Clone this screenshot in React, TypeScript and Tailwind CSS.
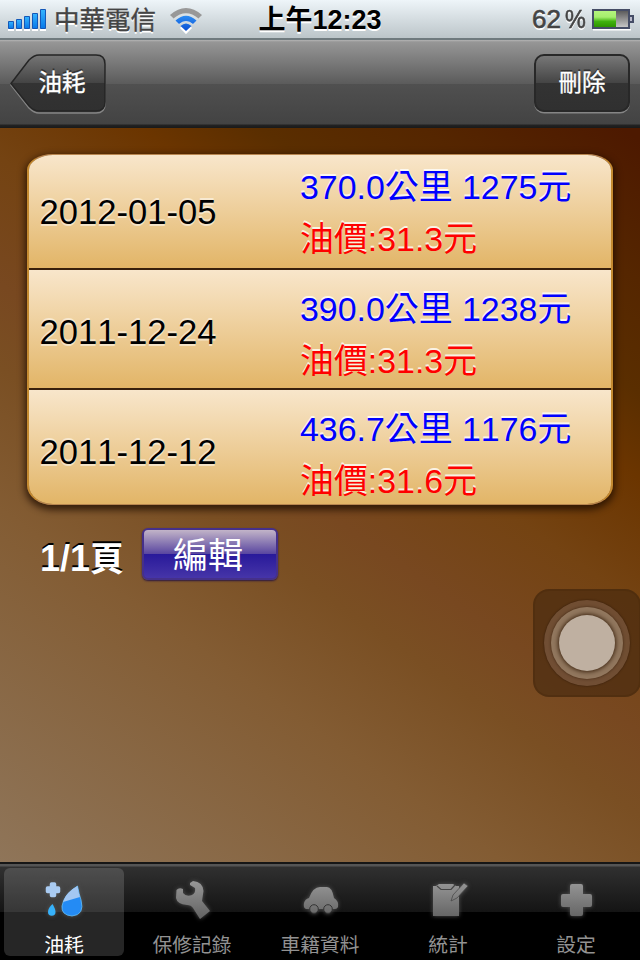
import React from "react";

const records = [
  { date: "2012-01-05", summary: "370.0公里 1275元", price: "油價:31.3元" },
  { date: "2011-12-24", summary: "390.0公里 1238元", price: "油價:31.3元" },
  { date: "2011-12-12", summary: "436.7公里 1176元", price: "油價:31.6元" },
];

const StatusBar = () => {
  return (
    <header className="flex h-10 items-start bg-gradient-to-b from-[#eef5f9] to-[#bcc5c9] border-b-2 border-[#6f7a7e] text-[#444]">
      <div className="flex w-[256px] items-start pl-2">
        <svg width="39" height="32" viewBox="0 0 39 32" className="shrink-0">
          <defs>
            <linearGradient id="bars" x1="0" y1="0" x2="0" y2="1">
              <stop offset="0" stopColor="#35b5ff" />
              <stop offset="1" stopColor="#0878e8" />
            </linearGradient>
          </defs>
          <path d="M0 29h6v2H0zM8 29h6v2H8zM16 29h6v2h-6zM24 29h6v2h-6zM32 29h6v2h-6z" fill="#fff" />
          <g fill="url(#bars)" stroke="#1458b8">
            <path d="M.5 21.500h5v7h-5z" />
            <path d="M8.500 19.500h5v9h-5z" />
            <path d="M16.500 16.500h5v12h-5z" />
            <path d="M24.500 13.500h5v15h-5z" />
            <path d="M32.500 9.500h5v19h-5z" />
          </g>
        </svg>
        <span className="ml-[7px] pt-1 text-[25.500px] leading-8 whitespace-nowrap [-webkit-text-stroke:0.4px_#444] [text-shadow:0_2px_0_#fff]">
          中華電信
        </span>
        <svg width="32" height="34" viewBox="0 0 32 34" className="ml-3.5 shrink-0">
          <defs>
            <linearGradient id="wifi" x1="0" y1="14" x2="0" y2="31" gradientUnits="userSpaceOnUse">
              <stop offset="0" stopColor="#2f93f8" />
              <stop offset="1" stopColor="#0a4fd0" />
            </linearGradient>
          </defs>
          <path d="M2 17Q16 5 30 17M8 23Q16 16 24 23M11 27 16 32 21 27" fill="none" stroke="#fff" strokeWidth="3" />
          <path d="M0 15Q16 1 32 15L28.500 18.500Q16 8 3.500 18.500Z" fill="#989898" />
          <path d="M5.500 20.500Q16 11 26.500 20.500L23 24Q16 18 9 24Z" fill="url(#wifi)" />
          <path d="M10.500 26Q16 21 21.500 26L16 31Z" fill="url(#wifi)" />
        </svg>
      </div>
      <div className="w-[128px] pt-1 text-center text-[27px] leading-8 font-bold whitespace-nowrap text-black [text-shadow:0_2px_0_#fff]">
        上午12:23
      </div>
      <div className="flex flex-1 items-start justify-end pr-1.5">
        <span className="pt-[3px] text-[26px] leading-8 [-webkit-text-stroke:0.6px_#444] [text-shadow:0_2px_0_#fff]">
          62<span className="ml-1 inline-block origin-left scale-x-90">%</span>
        </span>
        <svg width="43" height="32" viewBox="0 0 43 32" className="ml-[3px]">
          <defs>
            <linearGradient id="charge" x1="0" y1="0" x2="0" y2="1">
              <stop offset="0" stopColor="#b4f47d" />
              <stop offset=".38" stopColor="#a5ee6d" />
              <stop offset=".65" stopColor="#40b20f" />
              <stop offset="1" stopColor="#2e9400" />
            </linearGradient>
            <linearGradient id="empty" x1="0" y1="0" x2="0" y2="1">
              <stop offset="0" stopColor="#555" />
              <stop offset="1" stopColor="#ccc" />
            </linearGradient>
          </defs>
          <path d="M2 29h38v1.500H2z" fill="#fff" />
          <path d="M2 10h36v18H2z" fill="url(#empty)" stroke="#454d66" strokeWidth="2" />
          <path d="M3 11h22v16H3z" fill="url(#charge)" />
          <path d="M39 16h3v6h-3" fill="#bbc" stroke="#454d66" strokeWidth="2" />
        </svg>
      </div>
    </header>
  );
};

const NavBar = () => {
  return (
    <nav className="flex h-[88px] justify-between bg-[linear-gradient(#b4b4b4_0,#969696_2px,#5b5b5b_44px,#505050_44px,#434343_84px,#222_85px,#1a1a1a)] px-2.5 pt-3.5 text-[23.500px] text-white">
      <button className="relative flex h-[60px] w-24 items-start justify-center pt-3 pl-2 [-webkit-text-stroke:0.3px_#fff] [text-shadow:0_-2px_0_#333]">
        <svg width="97" height="60" viewBox="0 0 97 60" className="absolute top-0 left-0">
          <defs>
            <linearGradient id="back" x1="0" y1="0" x2="0" y2="1">
              <stop offset="0" stopColor="#757575" />
              <stop offset=".5" stopColor="#444" />
              <stop offset=".5" stopColor="#333" />
              <stop offset="1" stopColor="#303030" />
            </linearGradient>
          </defs>
          <path d="M1 31 19 7Q24 2 29 2H86Q95 2 95 11V50Q95 59 86 59H29Q24 59 19 54Z" fill="none" stroke="#858585" strokeWidth="1.500" />
          <path d="M1 29.500 19 6Q24 1 29 1H86Q95 1 95 10V48Q95 57 86 57H29Q24 57 19 52Z" fill="url(#back)" stroke="#252525" strokeWidth="1.500" />
        </svg>
        <span className="relative">油耗</span>
      </button>
      <button className="flex h-[58px] w-24 items-start justify-center rounded-[10px] border-2 border-[#282828] bg-[linear-gradient(#777,#444_50%,#333_50%,#303030)] pt-2.5 shadow-[0_1.5px_0_#858585] [-webkit-text-stroke:0.3px_#fff] [text-shadow:0_-2px_0_#333]">
        刪除
      </button>
    </nav>
  );
};

const RecordList = () => {
  return (
    <section className="mx-[27px] mt-[26px] overflow-hidden rounded-[26px_26px_26px_26px/16px_16px_20px_20px] border-x-2 border-y border-x-[#c48a30] border-y-[#b88650] shadow-[0_3px_7px_2px_rgba(30,12,0,0.75)]">
      {records.map((record, index) => (
        <div
          key={index}
          className="flex h-[120px] items-center border-b-2 border-[#38200c] bg-[linear-gradient(#f8e6cb,#f3dab2_25%,#e2b567)] pt-[5px] first:h-[115px] first:pt-0 last:h-[114px] last:border-b-0 last:pt-[9px]"
        >
          <div className="w-[260px] pl-[10.500px] text-[34.600px] leading-10 [text-shadow:0_-2px_0_rgba(255,255,255,0.5),0_2px_0_rgba(255,255,255,0.5)]">
            {record.date}
          </div>
          <div className={`pl-[11px] text-[33.900px] leading-[52px] whitespace-nowrap [text-shadow:0_-2px_0_rgba(255,255,255,0.8)] ${index === 0 ? "pt-0.5" : "pt-1.5"}`}>
            <p className="text-[#00f]">{record.summary}</p>
            <p className="text-[#f00]">{record.price}</p>
          </div>
        </div>
      ))}
    </section>
  );
};

const AssistiveTouch = () => {
  return (
    <div className="absolute top-[589px] left-[533px] flex h-[108px] w-[108px] items-center justify-center rounded-2xl border-2 border-[#482809]/40 bg-[#46290f]/65">
      <div className="flex size-[86px] items-center justify-center rounded-full bg-[#a08070]/35 shadow-[0_0_2px_#2e1808]">
        <div className="flex size-[72px] items-center justify-center rounded-full bg-[#a08970]/70 shadow-[0_0_3px_#3c2410]">
          <div className="size-14 rounded-full bg-[#bfb0a1] shadow-[0_0_4px_1px_#3c2410]"></div>
        </div>
      </div>
    </div>
  );
};

const DropIcon = () => (
  <>
    <path d="M17.500 16H20.500V20H24.500V23.500H20.500V27.500H17.500V23.500H13.500V20H17.500Z" fill="#a9cbf2" stroke="#a9cbf2" strokeWidth="3.500" strokeLinejoin="round" />
    <path d="M18.500 36Q21.500 41 21.500 44A3.700 3.700 0 0 1 14 44Q14 40 18.500 36Z" fill="#36b1fa" />
    <path d="M43.500 18Q45 26 47 32Q51 47 38 48Q27 47 28 38Q30 26 43.500 18Z" fill="#248bf4" stroke="#62bffa" strokeWidth=".8" />
    <path d="M43.500 18Q44.500 24 46 29L29 34Q32 24 43.500 18Z" fill="#a3c7f2" />
  </>
);

const WrenchIcon = () => (
  <path d="M28 15 31 13Q41 14 41.500 23L40 33 48 43 38 51 31 40Q29 37 25 37Q15 36 14 30L14.500 22Q17 19 21 21L21 25Q24 29 30 27Q34 25 33 20L28 17Z" />
);

const CarIcon = () => (
  <>
    <path d="M16 41Q13 40 14 35Q15 31 19 30Q23 19 30 19H37Q42 19 44 30Q49 33 48 39Q47 41 45 41Z" />
    <g stroke="#333" strokeWidth="1">
      <circle cx="24" cy="41" r="4.300" />
      <circle cx="38" cy="41" r="4.300" />
    </g>
  </>
);

const NoteIcon = () => (
  <>
    <path d="M15 18H18L21 16H35L38 18H41V48H15Z" />
    <path d="M19 18 23 21.500H33L37 17" fill="none" stroke="#444" strokeWidth="1.200" />
    <path d="M46 15 50 18 39 30 33 33 35 27Z" stroke="#444" strokeWidth=".7" />
  </>
);

const PlusIcon = () => (
  <path d="M26 16H35Q37 16 37 18V26H44Q46 26 46 28V37Q46 39 44 39H37V46Q37 48 35 48H26Q24 48 24 46V39H17Q15 39 15 37V28Q15 26 17 26H24V18Q24 16 26 16Z" />
);

const tabs = [
  { label: "油耗", icon: DropIcon },
  { label: "保修記錄", icon: WrenchIcon },
  { label: "車籍資料", icon: CarIcon },
  { label: "統計", icon: NoteIcon },
  { label: "設定", icon: PlusIcon },
];

const TabBar = () => {
  return (
    <footer className="flex h-[98px] border-t-2 border-[#161616] bg-[linear-gradient(#555_2px,#303030_3px,#141414_48px,#000_48px)] pt-1">
      <svg width="0" height="0" className="absolute">
        <defs>
          <linearGradient id="tabGray" x1="0" y1="12" x2="0" y2="48" gradientUnits="userSpaceOnUse">
            <stop offset="0" stopColor="#999" />
            <stop offset="1" stopColor="#666" />
          </linearGradient>
        </defs>
      </svg>
      {tabs.map((tab, index) => (
        <div key={index} className="flex w-32 justify-center">
          <div
            className={`flex h-[88px] w-[120px] flex-col items-center rounded-md ${
              index === 0 ? "bg-white/15 text-white" : "text-[#929292]"
            }`}
          >
            <svg width="60" height="60" viewBox="0 0 60 60" fill="url(#tabGray)" className="shrink-0 drop-shadow-[0_0_2px_#555]">
              <tab.icon />
            </svg>
            <span className="mt-1 text-[19.800px] leading-[26px] whitespace-nowrap">{tab.label}</span>
          </div>
        </div>
      ))}
    </footer>
  );
};

const App = () => {
  return (
    <div className="relative flex h-[960px] w-[640px] flex-col overflow-hidden bg-[linear-gradient(35deg,#8f7559_7%,#835c33_32%,#7a4f23_42%,#784820_48%,#744312_57%,#6b3500_66%,#5a2e00_72%,#552600_80%,#4d1900_90%)] font-['Liberation_Sans','Noto_Sans_CJK_TC',sans-serif] [font-kerning:none]">
      <StatusBar />
      <NavBar />
      <main className="flex-1">
        <RecordList />
        <div className="mt-[23px] flex items-start pl-10">
          <span className="w-[102px] pt-2 text-[36px] leading-[46px] font-bold text-white [text-shadow:0_-2px_0_#000]">
            1/1<span className="text-[34px]">頁</span>
          </span>
          <button className="h-[52px] w-[136px] rounded-md border-2 border-[#45308a] bg-[linear-gradient(#c2b4c8,#5845a0_50%,#28199a_50%,#4635a8)] pt-0.5 pr-1 text-[35px] leading-[48px] text-white shadow-[0_1px_2px_#2b1740]">
            編輯
          </button>
        </div>
      </main>
      <TabBar />
      <AssistiveTouch />
    </div>
  );
};

export default App;
